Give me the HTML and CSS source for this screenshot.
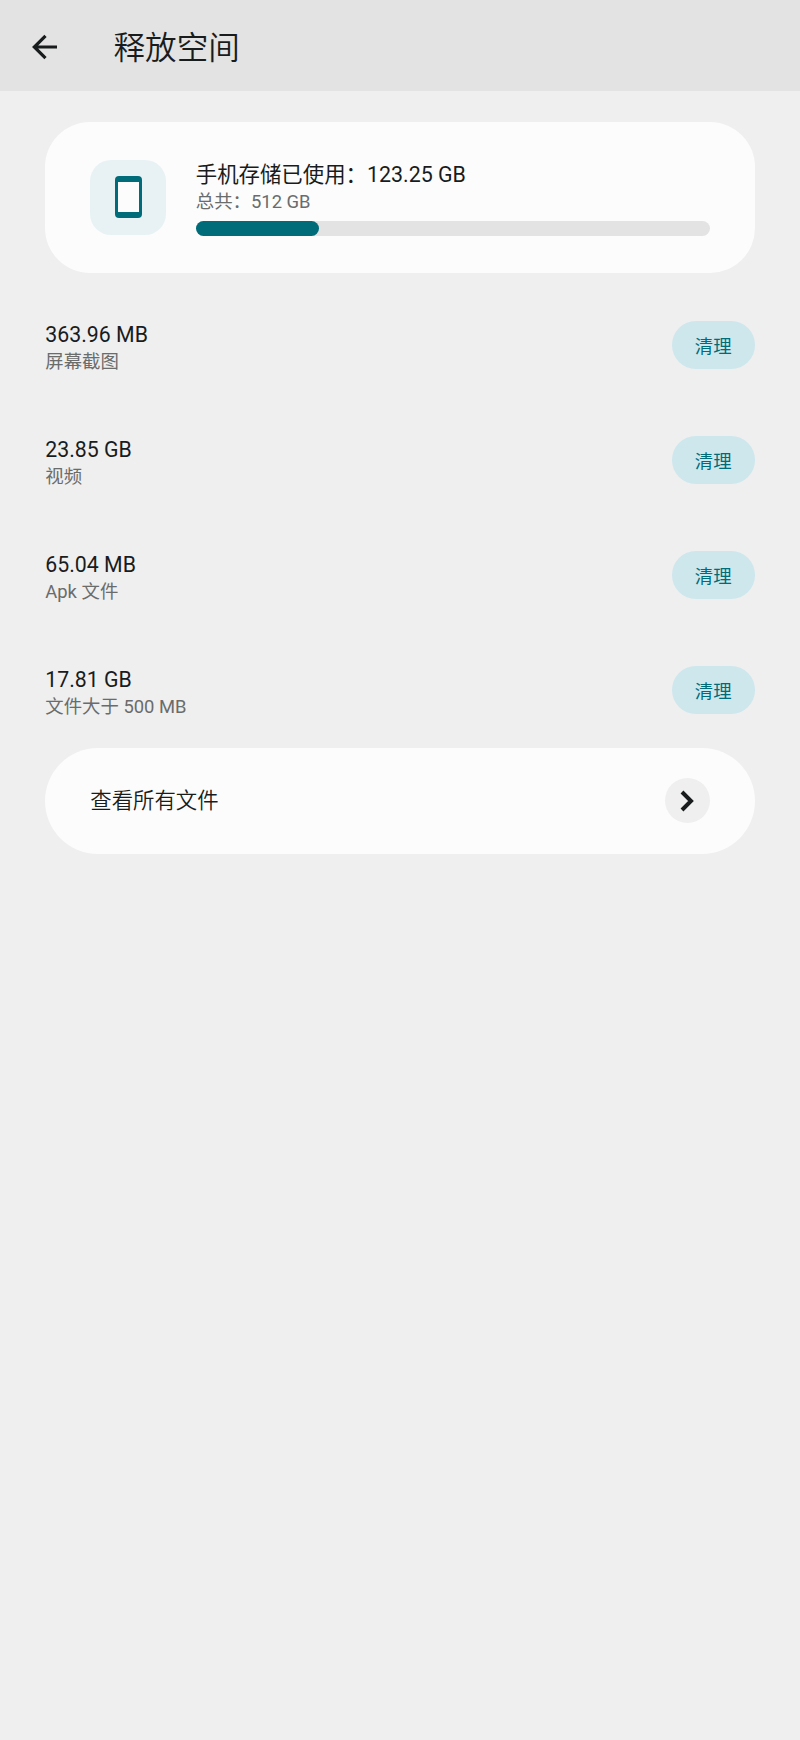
FILE: index.html
```html
<!DOCTYPE html>
<html lang="zh-CN">

<head>
    <meta charset="UTF-8">
    <title>释放空间</title>
    <link rel="stylesheet" href="styles.css">
</head>

<body>
<header class="header">
    <svg class="back" viewBox="0 0 26 26">
        <path d="M25 13H2.5M13.5 1.8L2.3 13l11.2 11.2"/>
    </svg>
    <h1>释放空间</h1>
</header>

<main class="content">
    <section class="storage">
        <div class="storage-icon">
            <svg viewBox="0 0 27 42">
                <rect width="27" height="42" rx="4" fill="#006c7a"/>
                <rect x="3" y="6" width="21" height="30" fill="#fcfcfc"/>
            </svg>
        </div>
        <div class="storage-info">
            <div class="title">手机存储已使用：123.25 GB</div>
            <div class="subtitle">总共：512 GB</div>
            <div class="progress">
                <div class="progress-bar" style="width: 24%"></div>
            </div>
        </div>
    </section>

    <ul class="list">
        <li class="item">
            <div class="item-info">
                <div class="title">363.96 MB</div>
                <div class="subtitle">屏幕截图</div>
            </div>
            <button class="clean-button">清理</button>
        </li>
        <li class="item">
            <div class="item-info">
                <div class="title">23.85 GB</div>
                <div class="subtitle">视频</div>
            </div>
            <button class="clean-button">清理</button>
        </li>
        <li class="item">
            <div class="item-info">
                <div class="title">65.04 MB</div>
                <div class="subtitle">Apk 文件</div>
            </div>
            <button class="clean-button">清理</button>
        </li>
        <li class="item">
            <div class="item-info">
                <div class="title">17.81 GB</div>
                <div class="subtitle">文件大于 500 MB</div>
            </div>
            <button class="clean-button">清理</button>
        </li>
    </ul>

    <section class="all-files">
        <div class="title">查看所有文件</div>
        <div class="arrow">
            <svg viewBox="0 0 14 22">
                <path d="M2 2l9 9-9 9"/>
            </svg>
        </div>
    </section>
</main>
</body>
</html>
```
FILE: styles.css
```css
* {
    box-sizing: border-box;
}

body {
    min-height: 100vh;
    margin: 0;
    background-color: #efefef;
    color: #191c1d;
    font-family: Roboto, "Noto Sans CJK SC", sans-serif;
}

.header {
    display: flex;
    align-items: center;
    gap: 56px;
    height: 91px;
    padding: 3px 31.5px 0;
    background-color: #e3e3e3;
}

.header h1 {
    margin: 0;
    padding-top: 4px;
    font-size: 31.6px;
    line-height: 44px;
    font-weight: 350;
}

.back {
    width: 26px;
    height: 26px;
    fill: none;
    stroke: #191c1d;
    stroke-width: 3.2;
}

.content {
    padding: 30.5px 45.3px 0;
}

.title {
    font-size: 21.3px;
    line-height: 28px;
}

.subtitle {
    color: #6a6c6c;
    font-size: 18.4px;
    line-height: 26px;
}

.storage {
    display: flex;
    align-items: center;
    gap: 30px;
    height: 151.5px;
    padding: 0 45px;
    background-color: #fcfcfc;
    border-radius: 45px;
}

.storage-icon {
    display: flex;
    align-items: center;
    justify-content: center;
    width: 75.5px;
    height: 75.5px;
    background-color: #e8f2f4;
    border-radius: 21px;
}

.storage-icon svg {
    width: 27px;
    height: 42px;
}

.storage-info {
    flex: 1;
    padding-top: 2px;
}

.storage-info .title {
    font-size: 21.4px;
}

.progress {
    height: 15px;
    margin-top: 6px;
    background-color: #e3e3e3;
    border-radius: 8px;
}

.progress-bar {
    height: 100%;
    background-color: #006c7a;
    border-radius: 8px;
}

.list {
    margin: 0;
    padding: 14px 0 1px;
    list-style: none;
}

.item {
    display: flex;
    align-items: center;
    justify-content: space-between;
    height: 115px;
}

.item-info {
    padding-top: 6px;
}

.clean-button {
    width: 83px;
    height: 48px;
    padding: 0;
    border: none;
    border-radius: 24px;
    background-color: #cde7ed;
    color: #006c7a;
    font-family: inherit;
    font-size: 18.4px;
    cursor: pointer;
}

.all-files {
    display: flex;
    align-items: center;
    justify-content: space-between;
    height: 105.5px;
    padding: 0 45px;
    background-color: #fcfcfc;
    border-radius: 53px;
}

.all-files .title {
    font-size: 21.4px;
    font-weight: 350;
}

.arrow {
    display: flex;
    align-items: center;
    justify-content: center;
    width: 45px;
    height: 45px;
    background-color: #efefef;
    border-radius: 50%;
}

.arrow svg {
    width: 14px;
    height: 22px;
    fill: none;
    stroke: #191c1d;
    stroke-width: 4;
}
```
